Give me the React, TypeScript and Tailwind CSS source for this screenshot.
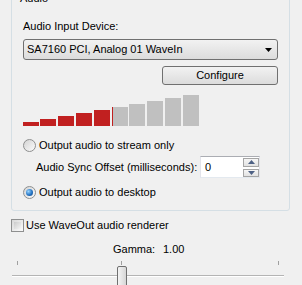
import React from 'react'

// level meter: first five lit, sixth just touched on its left edge
const BARS = [
  { h: 4, ml: 0, lit: true },
  { h: 7, ml: 1, lit: true },
  { h: 10, ml: 2, lit: true },
  { h: 13, ml: 2, lit: true },
  { h: 16, ml: 2, lit: true },
  { h: 19, ml: 2, lit: false, edge: true },
  { h: 22, ml: 1, lit: false },
  { h: 25, ml: 2, lit: false },
  { h: 28, ml: 2, lit: false },
  { h: 31, ml: 2, lit: false },
]

function Radio({ checked }: { checked?: boolean }) {
  return (
    <span className="w-[13px] h-[13px] shrink-0 rounded-full border border-[#8e8f8f] bg-gradient-to-br from-[#d4d4d4] to-[#fbfbfb] flex items-center justify-center">
      {checked && (
        <span className="w-[7px] h-[7px] rounded-full bg-[radial-gradient(circle_at_35%_35%,#9ad6ff,#2574c4_55%,#0e3f7a)]" />
      )}
    </span>
  )
}

function SpinArrow({ up }: { up?: boolean }) {
  return (
    <svg width="7" height="4" viewBox="0 0 7 4">
      {up ? <path d="M3.5 0 L7 4 L0 4 Z" fill="#4d6185" /> : <path d="M0 0 L7 0 L3.5 4 Z" fill="#4d6185" />}
    </svg>
  )
}

function AudioGroup() {
  return (
    <div className="relative ml-[11px] mt-[-8px] h-[219px] w-[279px] rounded-[3px] border border-[#d5dfe5] px-[11px] pt-[27px]">
      <span className="absolute left-[7px] top-[-1px] px-[1px] bg-[#f0f0f0]">Audio</span>

      <div className="h-[13px]">Audio Input Device:</div>

      {/* device combo */}
      <div className="mt-[6px] flex h-[21px] items-center justify-between rounded-[3px] border border-[#707070] bg-gradient-to-b from-[#f2f2f2] to-[#dcdcdc] pl-[3px] pr-[5px]">
        <span>SA7160 PCI, Analog 01 WaveIn</span>
        <svg width="7" height="4" viewBox="0 0 7 4">
          <path d="M0 0 L7 0 L3.5 4 Z" fill="#000" />
        </svg>
      </div>

      <div className="mt-[6px] flex justify-end">
        <button className="h-[19px] w-[116px] rounded-[3px] border border-[#707070] bg-gradient-to-b from-[#f2f2f2] to-[#dcdcdc] leading-[17px]">
          Configure
        </button>
      </div>

      {/* level meter */}
      <div className="mt-[10px] flex h-[31px] items-end">
        {BARS.map((b, i) => (
          <div
            key={i}
            className={
              b.lit
                ? 'w-[16px] bg-[#c12020]'
                : b.edge
                  ? 'w-[16px] bg-[#c0c0c0] border-l border-[#c12020]'
                  : 'w-[16px] bg-[#c0c0c0]'
            }
            style={{ height: b.h, marginLeft: b.ml }}
          />
        ))}
      </div>

      <label className="mt-[13px] flex h-[13px] items-center gap-[3px]">
        <Radio />
        <span>Output audio to stream only</span>
      </label>

      <div className="mt-[4px] flex h-[22px] items-center pl-[13px]">
        <span className="w-[164px]">Audio Sync Offset (milliseconds):</span>
        <div className="flex h-[22px] w-[60px] border border-[#abadb3] border-b-[#e3e9ef] border-x-[#e2e3ea] bg-white">
          <span className="flex-1 pl-[4px] leading-[20px]">0</span>
          <div className="flex w-[16px] flex-col gap-[2px] pt-[1px]">
            <span className="flex h-[9px] items-center justify-center border border-[#a5a5a5] bg-gradient-to-b from-[#f6f6f6] to-[#e2e2e2]">
              <SpinArrow up />
            </span>
            <span className="flex h-[9px] items-center justify-center border border-[#a5a5a5] bg-gradient-to-b from-[#f6f6f6] to-[#e2e2e2]">
              <SpinArrow />
            </span>
          </div>
        </div>
      </div>

      <label className="mt-[8px] flex h-[13px] items-center gap-[3px]">
        <Radio checked />
        <span>Output audio to desktop</span>
      </label>
    </div>
  )
}

export default function App() {
  return (
    <div className="relative h-[285px] w-[302px] overflow-hidden bg-[#f0f0f0] font-['Liberation_Sans',Arial,sans-serif] text-[11px] leading-[13px] text-black">
      <AudioGroup />

      <label className="ml-[11px] mt-[8px] flex h-[13px] items-center gap-[2px]">
        <span className="h-[13px] w-[13px] shrink-0 border border-[#8e8f8f] bg-gradient-to-br from-[#d8d8d8] to-[#fbfbfb] p-[2px]">
          <span className="block h-full w-full bg-gradient-to-br from-[#cbcbcb] to-[#f4f4f4]" />
        </span>
        <span>Use WaveOut audio renderer</span>
      </label>

      <div className="mt-[11px] flex h-[13px] pl-[113px]">
        <span className="w-[50px]">Gamma:</span>
        <span>1.00</span>
      </div>

      {/* gamma trackbar */}
      <div className="relative h-[29px]">
        <span className="absolute left-[17px] top-[5px] h-[4px] w-px bg-[#a0a0a0]" />
        <span className="absolute left-[121px] top-[5px] h-[4px] w-px bg-[#a0a0a0]" />
        <span className="absolute left-[278px] top-[5px] h-[4px] w-px bg-[#a0a0a0]" />
        <span className="absolute left-[12px] top-[19px] h-[2px] w-[272px] border-b border-white bg-[#b4b4b4]" />
        <span className="absolute left-[117px] top-[10px] h-[24px] w-[10px] rounded-t-[2px] border border-[#707070] bg-gradient-to-r from-[#f4f4f4] to-[#d6d6d6]" />
      </div>
    </div>
  )
}
